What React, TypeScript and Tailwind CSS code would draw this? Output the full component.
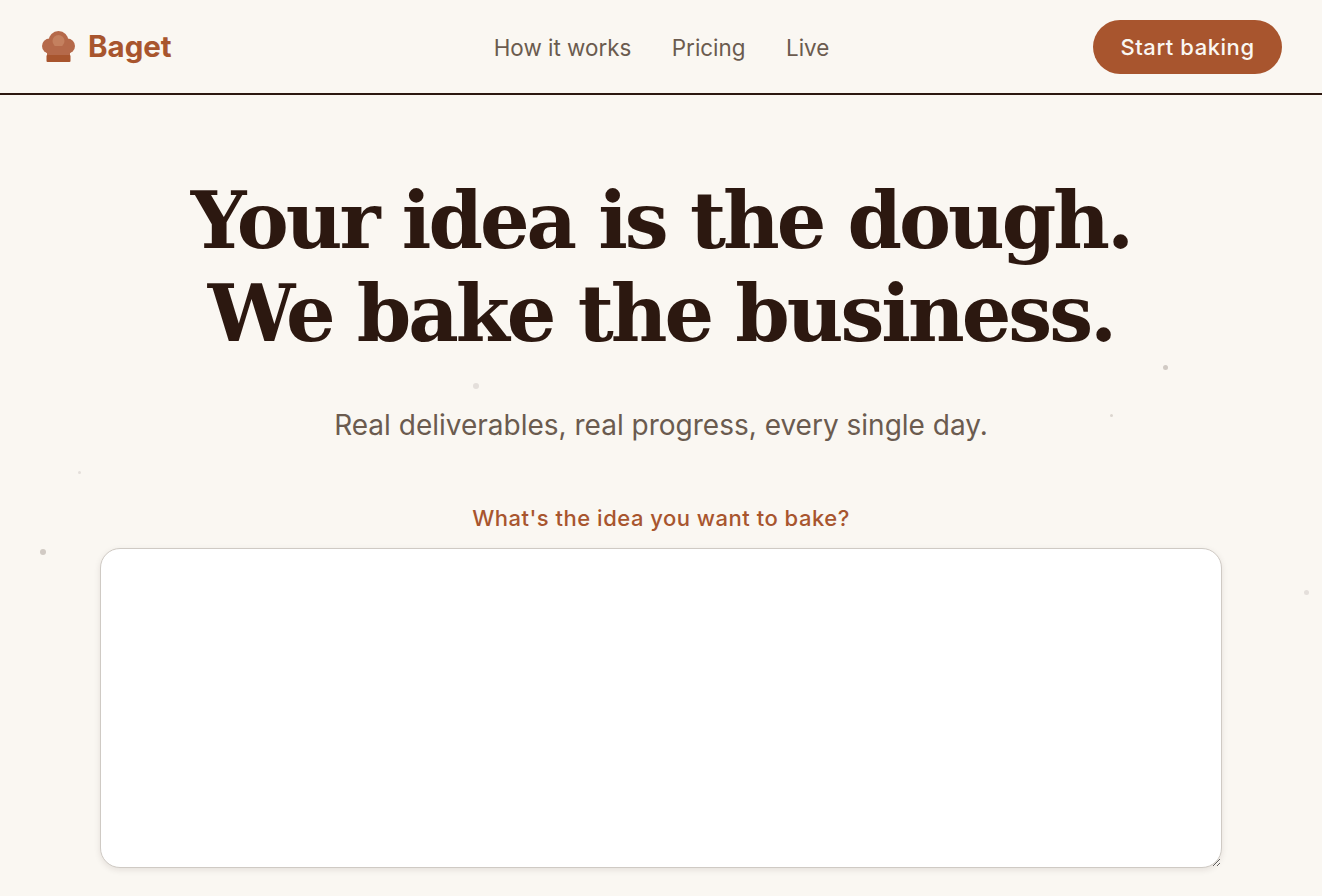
const DOTS = [
  { cls: "left-[473px] top-[383px] w-[6px] h-[6px] opacity-10" },
  { cls: "left-[1163px] top-[365px] w-[5px] h-[5px] opacity-20" },
  { cls: "left-[1110px] top-[414px] w-[3px] h-[3px] opacity-15" },
  { cls: "left-[78px] top-[471px] w-[3px] h-[3px] opacity-10" },
  { cls: "left-[40px] top-[549px] w-[6px] h-[6px] opacity-20" },
  { cls: "left-[1304px] top-[590px] w-[5px] h-[5px] opacity-10" },
];

function Logo() {
  return (
    <svg width="36" height="34" viewBox="0 0 36 34" className="shrink-0">
      <circle cx="8.5" cy="16" r="7.5" fill="#b5694a" />
      <circle cx="26.5" cy="16" r="7.5" fill="#b5694a" />
      <circle cx="17.5" cy="11" r="10" fill="#b5694a" />
      <circle cx="17.5" cy="11" r="6" fill="#c4805f" />
      <rect x="6" y="16" width="23" height="11" fill="#b5694a" />
      <rect x="5.5" y="25" width="24" height="7" rx="1" fill="#a8552e" />
    </svg>
  );
}

export default function App() {
  return (
    <div className="relative h-[896px] overflow-hidden bg-[#faf7f2] font-['Inter',sans-serif]">
      {DOTS.map((d) => (
        <div key={d.cls} className={`absolute rounded-full bg-[#2c1810] ${d.cls}`} />
      ))}

      <nav className="relative flex h-[95px] items-center border-b-2 border-[#2c1810] pl-[41px] pr-[40px]">
        <div className="flex flex-1 items-center gap-[11px]">
          <Logo />
          <span className="text-[29.5px] font-bold text-[#a8552e]">Baget</span>
        </div>
        <div className="flex items-center gap-[40.5px] pt-[2px] text-[22.4px] text-[#6b5b4f]">
          <a>How it works</a>
          <a>Pricing</a>
          <a>Live</a>
        </div>
        <div className="flex flex-1 justify-end">
          <a className="flex h-[54px] w-[189px] items-center justify-center rounded-[27px] bg-[#a8552e] pt-[2px] text-[22px] font-medium tracking-[0.55px] text-[#faf7f2]">
            Start baking
          </a>
        </div>
      </nav>

      <main className="relative flex flex-col items-center px-[100px] pt-[79px]">
        <h1 className="whitespace-nowrap text-center font-['DejaVu_Serif',serif] text-[78px] font-bold leading-[93px] tracking-[-3px] text-[#2c1810]">
          Your idea is the dough.
          <br />
          We bake the business.
        </h1>
        <p className="mt-[45px] text-[28px] leading-[40px] text-[#6b5b4f]">
          Real deliverables, real progress, every single day.
        </p>
        <label className="mt-[57px] text-[22px] font-medium leading-[32px] tracking-[0.5px] text-[#a8552e]">
          What's the idea you want to bake?
        </label>
        <textarea className="mt-[14px] h-[320px] w-full rounded-[20px] border-[1.5px] border-[#cfcac4] bg-white shadow-[0_2px_6px_rgba(44,24,16,0.1)] outline-none" />
      </main>
    </div>
  );
}
